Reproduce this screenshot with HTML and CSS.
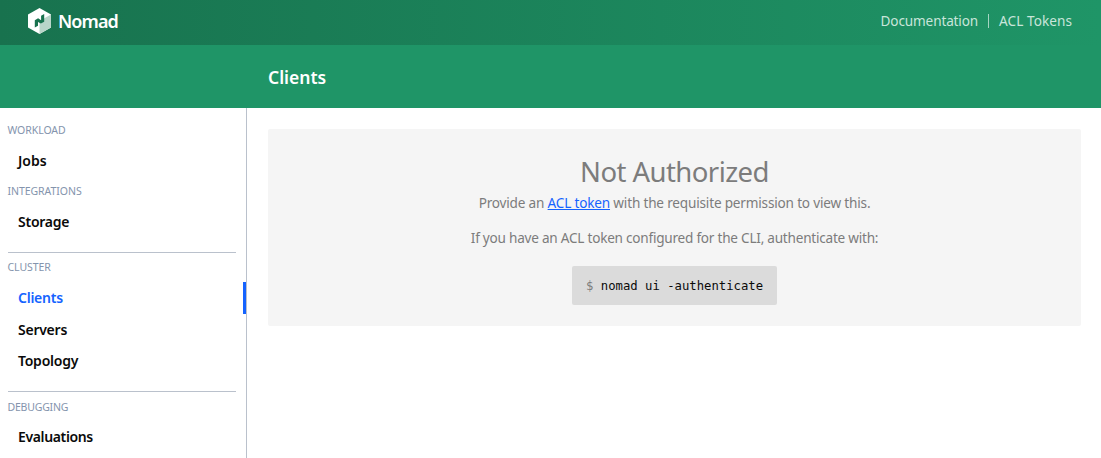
FILE: index.html
```html
<!DOCTYPE html>
<html lang="en">
<head>
<meta charset="utf-8">
<title>Clients - Nomad</title>
<link rel="stylesheet" href="styles.css">
</head>
<body>
<header class="navbar">
  <a class="logo">
    <svg width="23" height="26" viewBox="0 0 23 26" aria-hidden="true">
      <path class="cube" d="M11.500 0 23 6.500v13L11.500 26 0 19.500V6.500z"/>
      <path class="cube-side" d="M11.500 13 23 6.500v13L11.500 26z"/>
      <path class="mark" d="M6.800 19.500V12.200l3.300-1.900 3 2V7.700l3.100-1.700v7.700l-3.300 1.900-2.900-1.700v3.800z"/>
    </svg>
    <span class="brand">Nomad</span>
  </a>
  <nav class="links"><a class="doc">Documentation</a><a class="tokens">ACL Tokens</a></nav>
</header>
<div class="subheader"><h1 class="page-title">Clients</h1></div>
<div class="page">
  <aside class="menu">
    <p class="label">Workload</p>
    <a class="item jobs">Jobs</a>
    <p class="label">Integrations</p>
    <a class="item">Storage</a>
    <hr class="rule">
    <p class="label">Cluster</p>
    <a class="item active">Clients</a>
    <a class="item">Servers</a>
    <a class="item">Topology</a>
    <hr class="rule">
    <p class="label debugging">Debugging</p>
    <a class="item evaluations">Evaluations</a>
  </aside>
  <main class="content">
    <section class="message">
      <h2 class="headline">Not Authorized</h2>
      <p class="body">Provide an <a class="link">ACL token</a> with the requisite permission to view this.</p>
      <p class="body second">If you have an ACL token configured for the CLI, authenticate with:</p>
      <pre class="command"><span class="prompt">$</span> nomad ui -authenticate</pre>
    </section>
  </main>
</div>
</body>
</html>
```
FILE: styles.css
```css
* { box-sizing: border-box; margin: 0; }
body { height: 458px; overflow: hidden; background: #fff; font: 14px/21px "Noto Sans", sans-serif; color: #0a0a0a; }
.navbar { height: 45px; display: flex; justify-content: space-between; align-items: center; padding: 0 29px 3px 28px; background: linear-gradient(to right, #18724e, #1f9567); color: #fff; }
.logo { display: flex; align-items: center; }
.cube { fill: #fff; }
.cube-side { fill: #b9d5c9; }
.mark { fill: #18724e; }
.brand { margin-left: 7px; font-size: 18px; font-weight: 600; letter-spacing: -.9px; }
.links { display: flex; align-items: center; color: #c9e5da; font-size: 13.600px; letter-spacing: -.150px; line-height: 20px; }
.tokens { margin-left: 10px; padding-left: 10px; border-left: 1px solid #a5d5c2; line-height: 14px; letter-spacing: 0.060px; }
.subheader { height: 63px; padding: 21px 0 0 268px; background: #1f9567; color: #fff; }
.page-title { font-size: 17.500px; line-height: 23px; font-weight: 600; }
.page { display: flex; height: 350px; }
.menu { width: 247px; flex: none; padding-top: 8px; border-right: 1px solid #bac1cc; }
.label { height: 29.250px; padding-left: 7.500px; color: #8494ad; font-size: 10.500px; line-height: 29px; letter-spacing: -.050px; text-transform: uppercase; }
.debugging { line-height: 30px; letter-spacing: -.200px; }
.item { display: block; height: 31.500px; padding-left: 18px; line-height: 31px; font-weight: 600; letter-spacing: -.250px; }
.jobs { letter-spacing: 0; }
.evaluations { letter-spacing: -.360px; }
.item.active { color: #1563ff; border-right: 3px solid #1563ff; }
.rule { height: 1px; margin: 14.250px 10px 0 8px; border: 0; background: #bac1cc; }
.content { flex: 1; padding: 21px 20px 0 21px; }
.message { height: 197px; padding-top: 25px; border-radius: 2px; background: #f5f5f5; color: #7c7c7c; display: flex; flex-direction: column; align-items: center; }
.headline { font-size: 27.500px; line-height: 35px; font-weight: 400; letter-spacing: -.550px; }
.body { height: 21px; margin-top: 3px; font-size: 13.600px; letter-spacing: -.190px; white-space: nowrap; }
.body.second { margin-top: 14px; letter-spacing: -.240px; }
.link { color: #1563ff; text-decoration: underline; }
.command { width: 205px; height: 39px; margin-top: 18px; padding: 1px 0 0 14px; border-radius: 2px; background: #dbdbdb; color: #0a0a0a; font: 12.250px/39px "DejaVu Sans Mono", monospace; }
.prompt { color: #7c7c7c; }
```
